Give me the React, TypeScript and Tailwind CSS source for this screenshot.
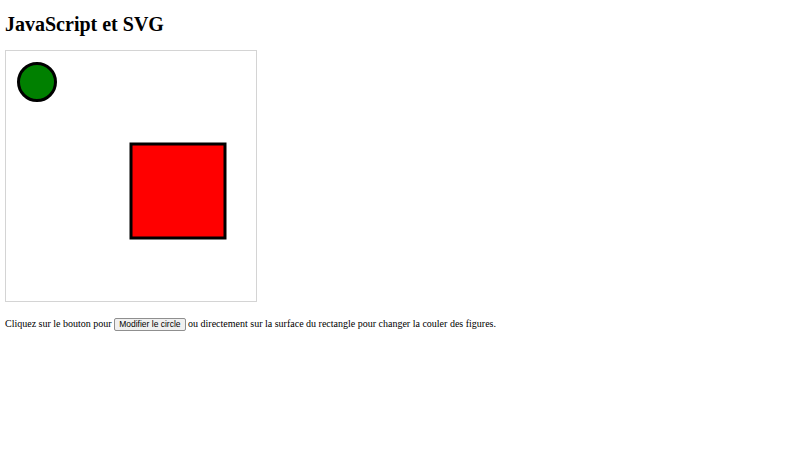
export default function App() {
  return (
    <div className="bg-white w-[800px] h-[450px] px-[5px] pt-[13px] text-black" style={{ fontFamily: '"Liberation Serif", "Times New Roman", serif' }}>
      <h1 className="text-[20px] font-bold leading-[23px] m-0">JavaScript et SVG</h1>
      <svg width="250" height="250" className="block mt-[14px] border border-[#d4d4d4] box-content">
        <circle cx="31" cy="31" r="18.5" fill="#008000" stroke="#000" strokeWidth="3" />
        <rect x="125" y="93" width="94" height="94" fill="#ff0000" stroke="#000" strokeWidth="3" />
      </svg>
      <p className="mt-[15px] text-[10px] leading-[14px] whitespace-nowrap">
        Cliquez sur le bouton pour{' '}
        <button className="inline-block px-[4px] h-[13px] text-[8.5px] leading-[11px] bg-[#f0f0f0] border border-[#8f8f8f] rounded-[2px] align-middle" style={{ fontFamily: '"Liberation Sans", Arial, sans-serif' }}>
          Modifier le circle
        </button>{' '}
        ou directement sur la surface du rectangle pour changer la couler des figures.
      </p>
    </div>
  );
}
